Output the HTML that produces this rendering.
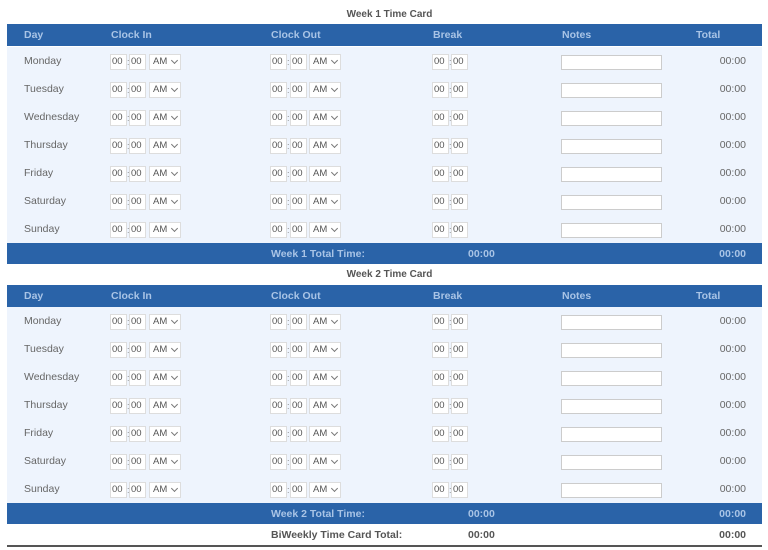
<!DOCTYPE html>
<html><head><meta charset="utf-8"><style>
*{margin:0;padding:0;box-sizing:border-box}
body{width:768px;height:550px;background:#fff;font-family:"Liberation Sans",sans-serif;color:#666;font-size:10.5px;position:relative;overflow:hidden}
.r{position:absolute;left:7px;width:755px}
.t{height:21px;font-weight:bold;color:#555;text-align:center;line-height:21px;font-size:10px;padding-left:10px}
.h{height:22px;background:#2a63a8;color:#a9c4e6;font-weight:bold}
.d{height:28px;background:#eef4fd}
.d>span{top:15px}
.tot{height:21px;background:#2a63a8;color:#a9c4e6;font-weight:bold}
.bw{height:21px;background:#fff;color:#555;font-weight:bold;border-bottom:2px solid #555}
.r span{position:absolute;top:50%;transform:translateY(-50%);white-space:nowrap}
.b{position:absolute;top:7px;height:16px;width:17px;border:1px solid #ddd;background:#fff;font-size:9.5px;line-height:14px;padding-left:1px;color:#555}
.c{position:absolute;top:7px;font-size:9px;line-height:16px;color:#888}
.s{position:absolute;top:7px;height:16px;width:32px;border:1px solid #ddd;background:#fff;font-size:9.5px;line-height:14px;padding-left:3px;color:#555}
.s i{position:absolute;right:3px;top:3px;width:5px;height:5px;border-right:1px solid #777;border-bottom:1px solid #777;transform:rotate(45deg)}
.n{position:absolute;top:8px;left:554px;width:101px;height:15px;border:1px solid #ccc;background:#fff}
.rt{right:16px}
</style></head><body>

<div class="r t" style="top:4px">Week 1 Time Card</div>
<div class="r h" style="top:24px"><span style="left:17px">Day</span><span style="left:104px">Clock In</span><span style="left:264px">Clock Out</span><span style="left:426px">Break</span><span style="left:555px">Notes</span><span style="left:689px">Total</span></div>

<div class="r d" style="top:47px"><span style="left:17px">Monday</span><div class="b" style="left:103px">00</div><div class="c" style="left:120px">:</div><div class="b" style="left:122px">00</div><div class="s" style="left:142px">AM<i></i></div><div class="b" style="left:263px">00</div><div class="c" style="left:280px">:</div><div class="b" style="left:283px">00</div><div class="s" style="left:302px">AM<i></i></div><div class="b" style="left:425px">00</div><div class="c" style="left:442px">:</div><div class="b" style="left:444px">00</div><div class="n"></div><span class="rt">00:00</span></div>
<div class="r d" style="top:75px"><span style="left:17px">Tuesday</span><div class="b" style="left:103px">00</div><div class="c" style="left:120px">:</div><div class="b" style="left:122px">00</div><div class="s" style="left:142px">AM<i></i></div><div class="b" style="left:263px">00</div><div class="c" style="left:280px">:</div><div class="b" style="left:283px">00</div><div class="s" style="left:302px">AM<i></i></div><div class="b" style="left:425px">00</div><div class="c" style="left:442px">:</div><div class="b" style="left:444px">00</div><div class="n"></div><span class="rt">00:00</span></div>
<div class="r d" style="top:103px"><span style="left:17px">Wednesday</span><div class="b" style="left:103px">00</div><div class="c" style="left:120px">:</div><div class="b" style="left:122px">00</div><div class="s" style="left:142px">AM<i></i></div><div class="b" style="left:263px">00</div><div class="c" style="left:280px">:</div><div class="b" style="left:283px">00</div><div class="s" style="left:302px">AM<i></i></div><div class="b" style="left:425px">00</div><div class="c" style="left:442px">:</div><div class="b" style="left:444px">00</div><div class="n"></div><span class="rt">00:00</span></div>
<div class="r d" style="top:131px"><span style="left:17px">Thursday</span><div class="b" style="left:103px">00</div><div class="c" style="left:120px">:</div><div class="b" style="left:122px">00</div><div class="s" style="left:142px">AM<i></i></div><div class="b" style="left:263px">00</div><div class="c" style="left:280px">:</div><div class="b" style="left:283px">00</div><div class="s" style="left:302px">AM<i></i></div><div class="b" style="left:425px">00</div><div class="c" style="left:442px">:</div><div class="b" style="left:444px">00</div><div class="n"></div><span class="rt">00:00</span></div>
<div class="r d" style="top:159px"><span style="left:17px">Friday</span><div class="b" style="left:103px">00</div><div class="c" style="left:120px">:</div><div class="b" style="left:122px">00</div><div class="s" style="left:142px">AM<i></i></div><div class="b" style="left:263px">00</div><div class="c" style="left:280px">:</div><div class="b" style="left:283px">00</div><div class="s" style="left:302px">AM<i></i></div><div class="b" style="left:425px">00</div><div class="c" style="left:442px">:</div><div class="b" style="left:444px">00</div><div class="n"></div><span class="rt">00:00</span></div>
<div class="r d" style="top:187px"><span style="left:17px">Saturday</span><div class="b" style="left:103px">00</div><div class="c" style="left:120px">:</div><div class="b" style="left:122px">00</div><div class="s" style="left:142px">AM<i></i></div><div class="b" style="left:263px">00</div><div class="c" style="left:280px">:</div><div class="b" style="left:283px">00</div><div class="s" style="left:302px">AM<i></i></div><div class="b" style="left:425px">00</div><div class="c" style="left:442px">:</div><div class="b" style="left:444px">00</div><div class="n"></div><span class="rt">00:00</span></div>
<div class="r d" style="top:215px"><span style="left:17px">Sunday</span><div class="b" style="left:103px">00</div><div class="c" style="left:120px">:</div><div class="b" style="left:122px">00</div><div class="s" style="left:142px">AM<i></i></div><div class="b" style="left:263px">00</div><div class="c" style="left:280px">:</div><div class="b" style="left:283px">00</div><div class="s" style="left:302px">AM<i></i></div><div class="b" style="left:425px">00</div><div class="c" style="left:442px">:</div><div class="b" style="left:444px">00</div><div class="n"></div><span class="rt">00:00</span></div>

<div class="r tot" style="top:243px"><span style="left:264px">Week 1 Total Time:</span><span style="left:461px">00:00</span><span class="rt">00:00</span></div>

<div class="r t" style="top:264px">Week 2 Time Card</div>
<div class="r h" style="top:285px"><span style="left:17px">Day</span><span style="left:104px">Clock In</span><span style="left:264px">Clock Out</span><span style="left:426px">Break</span><span style="left:555px">Notes</span><span style="left:689px">Total</span></div>

<div class="r d" style="top:307px"><span style="left:17px">Monday</span><div class="b" style="left:103px">00</div><div class="c" style="left:120px">:</div><div class="b" style="left:122px">00</div><div class="s" style="left:142px">AM<i></i></div><div class="b" style="left:263px">00</div><div class="c" style="left:280px">:</div><div class="b" style="left:283px">00</div><div class="s" style="left:302px">AM<i></i></div><div class="b" style="left:425px">00</div><div class="c" style="left:442px">:</div><div class="b" style="left:444px">00</div><div class="n"></div><span class="rt">00:00</span></div>
<div class="r d" style="top:335px"><span style="left:17px">Tuesday</span><div class="b" style="left:103px">00</div><div class="c" style="left:120px">:</div><div class="b" style="left:122px">00</div><div class="s" style="left:142px">AM<i></i></div><div class="b" style="left:263px">00</div><div class="c" style="left:280px">:</div><div class="b" style="left:283px">00</div><div class="s" style="left:302px">AM<i></i></div><div class="b" style="left:425px">00</div><div class="c" style="left:442px">:</div><div class="b" style="left:444px">00</div><div class="n"></div><span class="rt">00:00</span></div>
<div class="r d" style="top:363px"><span style="left:17px">Wednesday</span><div class="b" style="left:103px">00</div><div class="c" style="left:120px">:</div><div class="b" style="left:122px">00</div><div class="s" style="left:142px">AM<i></i></div><div class="b" style="left:263px">00</div><div class="c" style="left:280px">:</div><div class="b" style="left:283px">00</div><div class="s" style="left:302px">AM<i></i></div><div class="b" style="left:425px">00</div><div class="c" style="left:442px">:</div><div class="b" style="left:444px">00</div><div class="n"></div><span class="rt">00:00</span></div>
<div class="r d" style="top:391px"><span style="left:17px">Thursday</span><div class="b" style="left:103px">00</div><div class="c" style="left:120px">:</div><div class="b" style="left:122px">00</div><div class="s" style="left:142px">AM<i></i></div><div class="b" style="left:263px">00</div><div class="c" style="left:280px">:</div><div class="b" style="left:283px">00</div><div class="s" style="left:302px">AM<i></i></div><div class="b" style="left:425px">00</div><div class="c" style="left:442px">:</div><div class="b" style="left:444px">00</div><div class="n"></div><span class="rt">00:00</span></div>
<div class="r d" style="top:419px"><span style="left:17px">Friday</span><div class="b" style="left:103px">00</div><div class="c" style="left:120px">:</div><div class="b" style="left:122px">00</div><div class="s" style="left:142px">AM<i></i></div><div class="b" style="left:263px">00</div><div class="c" style="left:280px">:</div><div class="b" style="left:283px">00</div><div class="s" style="left:302px">AM<i></i></div><div class="b" style="left:425px">00</div><div class="c" style="left:442px">:</div><div class="b" style="left:444px">00</div><div class="n"></div><span class="rt">00:00</span></div>
<div class="r d" style="top:447px"><span style="left:17px">Saturday</span><div class="b" style="left:103px">00</div><div class="c" style="left:120px">:</div><div class="b" style="left:122px">00</div><div class="s" style="left:142px">AM<i></i></div><div class="b" style="left:263px">00</div><div class="c" style="left:280px">:</div><div class="b" style="left:283px">00</div><div class="s" style="left:302px">AM<i></i></div><div class="b" style="left:425px">00</div><div class="c" style="left:442px">:</div><div class="b" style="left:444px">00</div><div class="n"></div><span class="rt">00:00</span></div>
<div class="r d" style="top:475px"><span style="left:17px">Sunday</span><div class="b" style="left:103px">00</div><div class="c" style="left:120px">:</div><div class="b" style="left:122px">00</div><div class="s" style="left:142px">AM<i></i></div><div class="b" style="left:263px">00</div><div class="c" style="left:280px">:</div><div class="b" style="left:283px">00</div><div class="s" style="left:302px">AM<i></i></div><div class="b" style="left:425px">00</div><div class="c" style="left:442px">:</div><div class="b" style="left:444px">00</div><div class="n"></div><span class="rt">00:00</span></div>

<div class="r tot" style="top:503px"><span style="left:264px">Week 2 Total Time:</span><span style="left:461px">00:00</span><span class="rt">00:00</span></div>
<div class="r bw" style="top:524px;height:23px"><span style="left:264px">BiWeekly Time Card Total:</span><span style="left:461px">00:00</span><span class="rt">00:00</span></div>

</body></html>
